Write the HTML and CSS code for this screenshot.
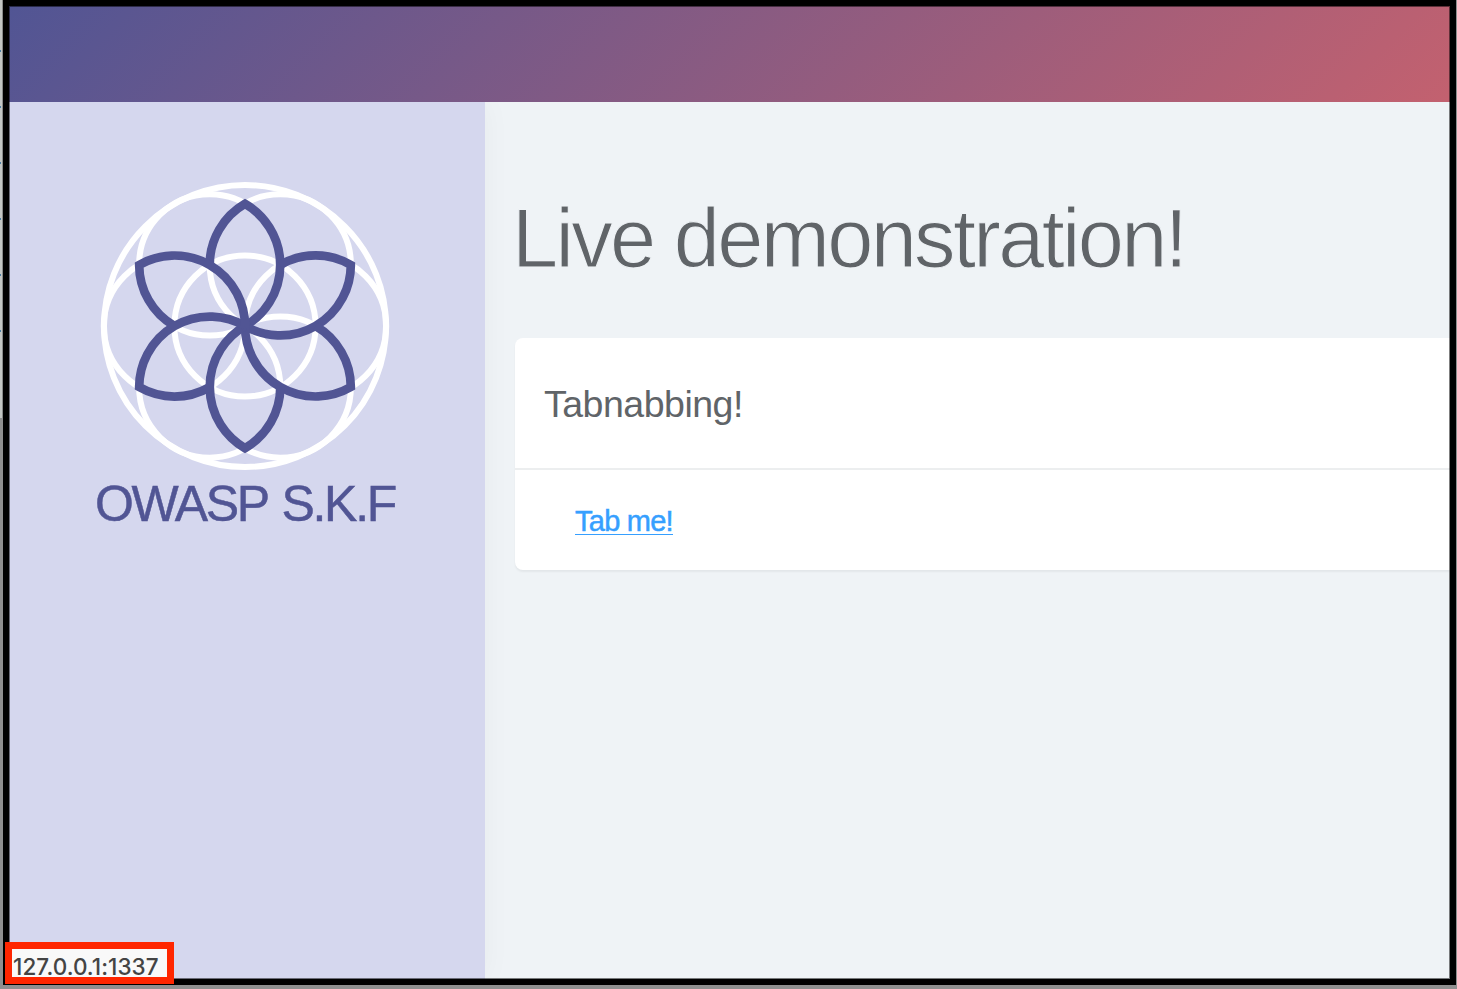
FILE: index.html
```
<!DOCTYPE html>
<html lang="en">
<head>
<meta charset="utf-8">
<title>OWASP S.K.F</title>
<link rel="stylesheet" href="styles.css">
</head>
<body>
<div class="desktop">
  <div class="edge"><i class="tick"></i><i class="tick"></i><i class="tick"></i><i class="tick"></i><i class="tick"></i><i class="tick"></i></div>
  <div class="window">
    <header class="topbar"></header>
    <div class="body">
      <aside class="sidebar">
        <svg class="logo" viewBox="-145 -145 290 290" width="290" height="290">
          <defs><path id="petal" d="M-35.3-61.1A70.6 70.6 0 0 1 0-122.2A70.6 70.6 0 0 1 0 0"/></defs>
          <g fill="none" stroke="#fff" stroke-width="6">
            <circle r="141"/>
            <circle r="70.6"/>
            <circle cx="-70.6" r="70.6"/>
            <circle cx="70.6" r="70.6"/>
            <circle cx="-35.3" cy="-61.1" r="70.6"/>
            <circle cx="35.3" cy="-61.1" r="70.6"/>
            <circle cx="-35.3" cy="61.1" r="70.6"/>
            <circle cx="35.3" cy="61.1" r="70.6"/>
          </g>
          <g fill="none" stroke="#515594" stroke-width="8.7">
            <use href="#petal"/>
            <use href="#petal" transform="rotate(60)"/>
            <use href="#petal" transform="rotate(120)"/>
            <use href="#petal" transform="rotate(180)"/>
            <use href="#petal" transform="rotate(240)"/>
            <use href="#petal" transform="rotate(300)"/>
          </g>
        </svg>
        <div class="brand">OWASP S.K.F</div>
      </aside>
      <main class="main">
        <h1 class="title">Live demonstration!</h1>
        <section class="card">
          <h2 class="card-title">Tabnabbing!</h2>
          <div class="card-body"><a class="link" href="#">Tab me!</a></div>
        </section>
      </main>
    </div>
  </div>
  <div class="status">127.0.0.1:1337</div>
</div>
</body>
</html>
```
FILE: styles.css
```
* { box-sizing: border-box; }
body { margin: 0; font-family: "Liberation Sans", Arial, sans-serif; color: #606468; }
.desktop {
  position: relative;
  display: flex;
  width: 1457px;
  height: 989px;
  overflow: hidden;
  background: #8f8f8f;
}
.edge {
  display: flex;
  flex-direction: column;
  gap: 54px;
  width: 3px;
  height: 418px;
  padding-top: 50px;
  background: #c3c6c4;
  border-right: 1px solid #898b8a;
}
.tick { width: 1px; height: 2px; background: #4a7fa5; }
.window {
  position: relative;
  z-index: 0;
  display: flex;
  flex-direction: column;
  width: 1453px;
  height: 985px;
  border: 6px solid #000;
  background: #eff3f6;
}
.window::after {
  content: "";
  position: absolute;
  z-index: 2;
  inset: 0;
  border: 1px solid rgba(0, 0, 0, .5);
  pointer-events: none;
}
.topbar {
  flex: none;
  height: 96px;
  background: linear-gradient(135deg, #515594, #c3616f);
}
.body { display: flex; flex: 1; min-height: 0; }
.sidebar {
  position: relative;
  z-index: 1;
  flex: none;
  display: flex;
  flex-direction: column;
  align-items: center;
  width: 476px;
  padding: 79px 4px 0 0;
  background: #d5d7ee;
  box-shadow: 0 0 28px rgba(0, 0, 0, .04);
  clip-path: inset(0 -30px 0 0);
}
.logo { display: block; }
.brand {
  margin-top: 4px;
  font-size: 50px;
  line-height: 58px;
  letter-spacing: -2.3px;
  word-spacing: 3px;
  white-space: nowrap;
  color: #515594;
  -webkit-text-stroke: .5px #515594;
}
.main { flex: 1; min-width: 0; padding: 89px 0 0 30px; }
.title {
  margin: 0 0 0 -3px;
  font-size: 83px;
  line-height: 96px;
  font-weight: 400;
  letter-spacing: -2.7px;
  white-space: nowrap;
  -webkit-text-stroke: 1.1px #eff3f6;
}
.card {
  height: 232px;
  margin-top: 51px;
  background: #fff;
  border-radius: 8px 0 0 8px;
  box-shadow: 0 2px 2px rgba(0, 0, 0, .05);
}
.card-title {
  height: 132px;
  margin: 0;
  padding: 45px 29px 0;
  border-bottom: 2px solid #eceeef;
  font-size: 37.5px;
  line-height: 43px;
  font-weight: 400;
  letter-spacing: -.5px;
}
.card-body { padding: 35px 60px; }
.link {
  display: inline-block;
  height: 30px;
  border-bottom: 1px solid #369fff;
  font-size: 29px;
  line-height: 33px;
  letter-spacing: -.75px;
  text-decoration: none;
  color: #369fff;
  -webkit-text-stroke: .5px #369fff;
}
.status {
  position: absolute;
  z-index: 3;
  left: 5px;
  top: 942px;
  width: 169px;
  height: 42px;
  border: 7px solid #ff2600;
  padding-left: 1px;
  background: #f9f9f9;
  color: #444;
  font: 500 22.5px/36px Inter, sans-serif;
  letter-spacing: .05px;
  white-space: nowrap;
}
```
